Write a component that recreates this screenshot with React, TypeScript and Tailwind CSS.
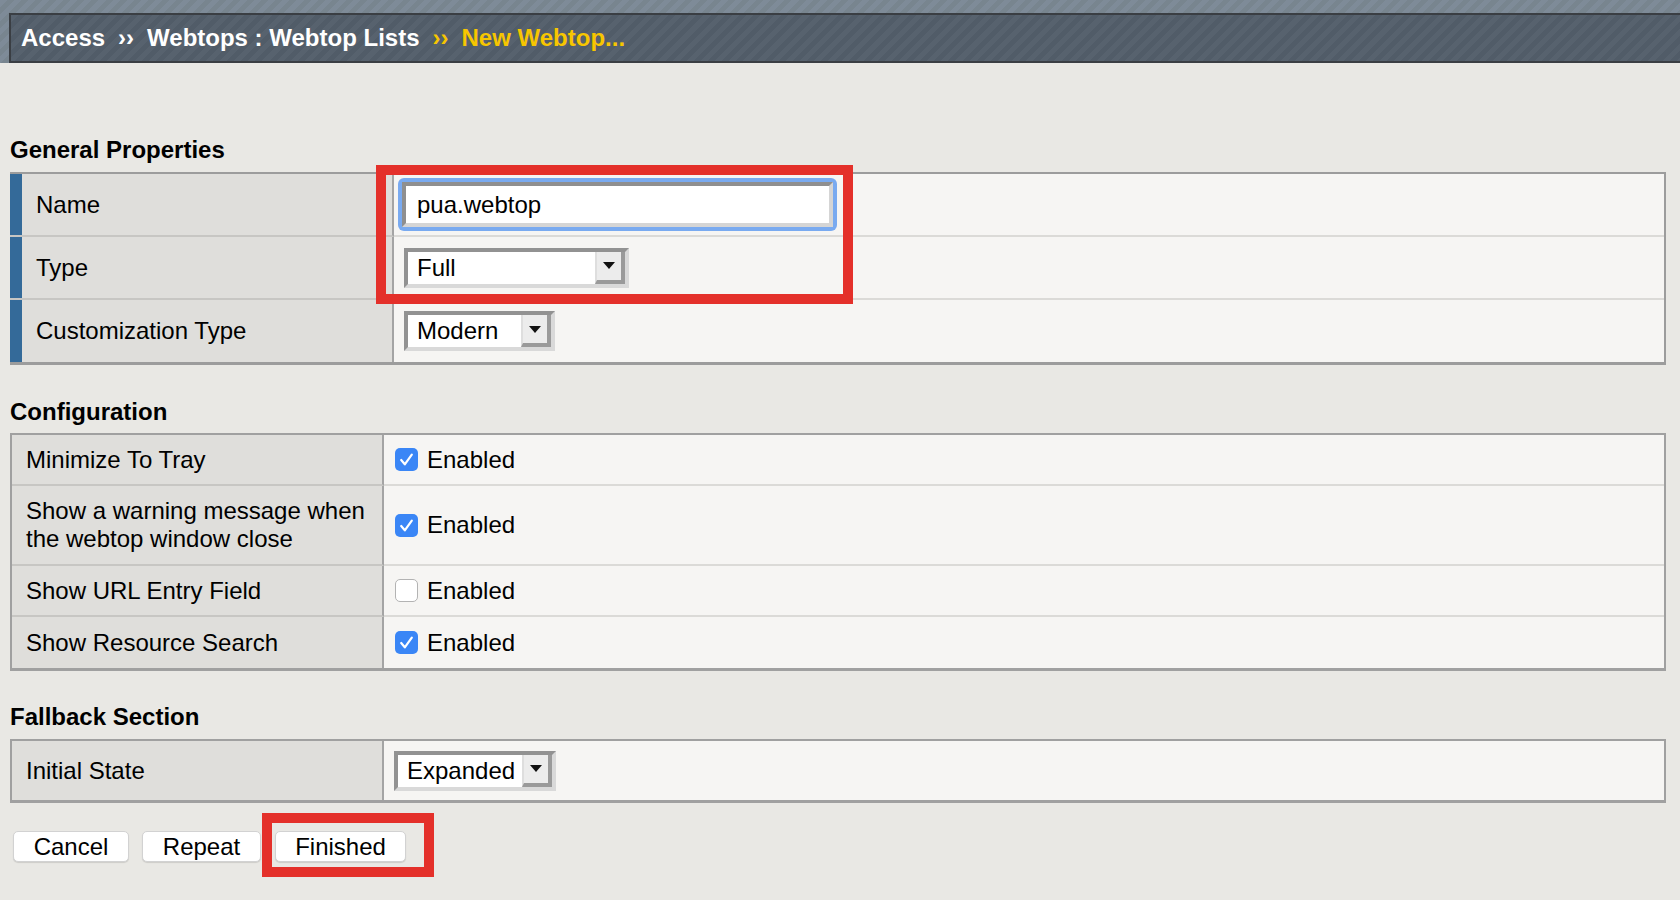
import React from "react";

function Check({ checked }: { checked: boolean }) {
  if (checked) {
    return (
      <div className="flex h-[23px] w-[23px] items-center justify-center rounded-[5px] bg-[#3a86f6]">
        <svg width="23" height="23" viewBox="0 0 23 23">
          <path d="M6.2 12 L9.8 16.3 L16.8 6.6" fill="none" stroke="#ffffff" strokeWidth="2.2" strokeLinecap="round" strokeLinejoin="round" />
        </svg>
      </div>
    );
  }
  return <div className="h-[23px] w-[23px] rounded-[5px] border border-[#b3b3b3] bg-white" />;
}

function Select({ value, className }: { value: string; className: string }) {
  return (
    <div
      className={`flex h-[40px] border-4 border-t-[#929292] border-l-[#929292] border-r-[#d9d9d9] border-b-[#d9d9d9] bg-white ${className}`}
    >
      <div className="flex flex-1 items-center pl-[9px] text-[24px] leading-none text-black">{value}</div>
      <div className="flex w-[30px] items-center justify-center border-l-2 border-r-4 border-b-4 border-l-[#dedede] border-r-[#9a9a9a] border-b-[#9a9a9a] bg-[#ececec]">
        <svg width="12" height="7" viewBox="0 0 12 7">
          <path d="M0 0H12L6 7Z" fill="#111111" />
        </svg>
      </div>
    </div>
  );
}

function ConfigRow({ label, checked, tall, last }: { label: React.ReactNode; checked: boolean; tall?: boolean; last?: boolean }) {
  const h = tall ? "h-[80px]" : "h-[51px]";
  const lb = last ? "" : "border-b-2 border-b-[#c7c6c3]";
  const vb = last ? "" : "border-b-2 border-b-[#dbdad7]";
  return (
    <div className={`flex ${h}`}>
      <div className={`flex w-[372px] items-center border-r-2 border-r-[#a4a4a4] bg-[#dfdedb] pl-[14px] text-[24px] leading-[28px] ${lb}`}>
        <div>{label}</div>
      </div>
      <div className={`flex flex-1 items-center gap-[9px] bg-[#f6f5f3] pl-[11px] text-[24px] ${vb}`}>
        <Check checked={checked} />
        <span>Enabled</span>
      </div>
    </div>
  );
}

export default function App() {
  return (
    <div className="min-h-[900px] w-full bg-[#e9e8e4] font-['Liberation_Sans',Arial,sans-serif] text-black">
      {/* Header */}
      <div className="bg-[repeating-linear-gradient(135deg,#7e8b98_0px,#7e8b98_5px,#78858f_5px,#78858f_10px)] pt-[13px] pl-[9px]">
        <div className="flex h-[50px] items-center border-y-2 border-l-2 border-[#3a3e43] bg-[repeating-linear-gradient(135deg,#57626e_0px,#57626e_5px,#515c68_5px,#515c68_10px)] pl-[10px] text-[24px] font-bold leading-[28px] text-white">
          <span>Access</span>
          <span className="mx-[13px]">››</span>
          <span>Webtops : Webtop Lists</span>
          <span className="mx-[13px] text-[#f7c600]">››</span>
          <span className="text-[#f7c600]">New Webtop...</span>
        </div>
      </div>

      <main className="pl-[10px] pr-[14px]">
        {/* General Properties */}
        <h2 className="mt-[73px] mb-[8px] text-[24px] font-bold leading-[28px]">General Properties</h2>
        <div className="relative border-t-2 border-r-2 border-b-[3px] border-[#9c9c9c]">
          <div className="flex h-[63px]">
            <div className="flex w-[384px] border-r-2 border-b-2 border-r-[#a4a4a4] border-b-[#c7c6c3] bg-[#dfdedb]">
              <div className="w-[12px] bg-[#346a99]" />
              <div className="flex items-center pl-[14px] text-[24px]">Name</div>
            </div>
            <div className="flex flex-1 items-center border-b-2 border-b-[#dbdad7] bg-[#f6f5f3] pl-[4px]">
              <div className="w-[439px] rounded-[6px] bg-[#79aaf0] p-[4px]">
                <div className="flex h-[45px] items-center border-4 border-t-[#8f8f8f] border-l-[#8f8f8f] border-r-[#d5d5d5] border-b-[#d5d5d5] bg-white pl-[11px] text-[24px]">
                  pua.webtop
                </div>
              </div>
            </div>
          </div>
          <div className="flex h-[63px]">
            <div className="flex w-[384px] border-r-2 border-b-2 border-r-[#a4a4a4] border-b-[#c7c6c3] bg-[#dfdedb]">
              <div className="w-[12px] bg-[#346a99]" />
              <div className="flex items-center pl-[14px] text-[24px]">Type</div>
            </div>
            <div className="flex flex-1 items-center border-b-2 border-b-[#dbdad7] bg-[#f6f5f3] pl-[10px]">
              <Select value="Full" className="w-[225px]" />
            </div>
          </div>
          <div className="flex h-[62px]">
            <div className="flex w-[384px] border-r-2 border-r-[#a4a4a4] bg-[#dfdedb]">
              <div className="w-[12px] bg-[#346a99]" />
              <div className="flex items-center pl-[14px] text-[24px]">Customization Type</div>
            </div>
            <div className="flex flex-1 items-center bg-[#f6f5f3] pl-[10px]">
              <Select value="Modern" className="w-[151px]" />
            </div>
          </div>
          {/* annotation box */}
          <div className="pointer-events-none absolute top-[-9px] left-[366px] h-[139px] w-[477px] border-[10px] border-[#e4302a]" />
        </div>

        {/* Configuration */}
        <h2 className="mt-[33px] mb-[7px] text-[24px] font-bold leading-[28px]">Configuration</h2>
        <div className="border-x-2 border-t-2 border-b-[3px] border-[#a0a0a0]">
          <ConfigRow label="Minimize To Tray" checked />
          <ConfigRow
            label={
              <>
                Show a warning message when
                <br />
                the webtop window close
              </>
            }
            checked
            tall
          />
          <ConfigRow label="Show URL Entry Field" checked={false} />
          <ConfigRow label="Show Resource Search" checked last />
        </div>

        {/* Fallback Section */}
        <h2 className="mt-[32px] mb-[8px] text-[24px] font-bold leading-[28px]">Fallback Section</h2>
        <div className="border-x-2 border-t-2 border-b-[3px] border-[#a0a0a0]">
          <div className="flex h-[59px]">
            <div className="flex w-[372px] items-center border-r-2 border-r-[#a4a4a4] bg-[#dfdedb] pl-[14px] text-[24px]">
              Initial State
            </div>
            <div className="flex flex-1 items-center bg-[#f6f5f3] pl-[10px]">
              <Select value="Expanded" className="w-[162px]" />
            </div>
          </div>
        </div>

        {/* Buttons */}
        <div className="mt-[28px] flex items-start pl-[3px]">
          <button className="h-[31px] w-[116px] rounded-[5px] border border-[#d2d2d2] bg-white text-[24px] leading-none shadow-[0_1px_1px_rgba(0,0,0,0.12)]">
            Cancel
          </button>
          <button className="ml-[13px] h-[31px] w-[119px] rounded-[5px] border border-[#d2d2d2] bg-white text-[24px] leading-none shadow-[0_1px_1px_rgba(0,0,0,0.12)]">
            Repeat
          </button>
          <div className="relative ml-[14px]">
            <button className="h-[31px] w-[131px] rounded-[5px] border border-[#d2d2d2] bg-white text-[24px] leading-none shadow-[0_1px_1px_rgba(0,0,0,0.12)]">
              Finished
            </button>
            <div className="pointer-events-none absolute top-[-18px] left-[-13px] h-[64px] w-[172px] border-[10px] border-[#e4302a]" />
          </div>
        </div>
      </main>
    </div>
  );
}
